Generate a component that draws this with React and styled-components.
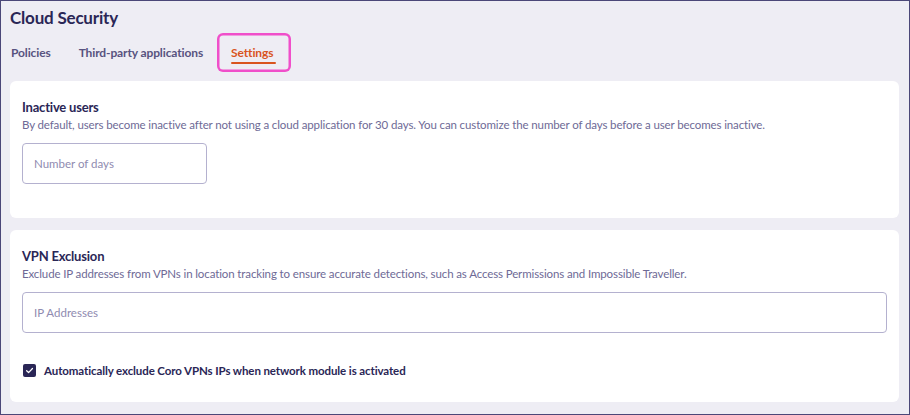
import React from 'react'
import styled, { createGlobalStyle } from 'styled-components'

const GlobalStyle = createGlobalStyle`
  html, body {
    margin: 0;
    padding: 0;
  }
  body {
    font-family: Lato, "Open Sans", sans-serif;
    color: #2a2656;
  }
`

const Page = styled.div`
  box-sizing: border-box;
  width: 910px;
  height: 415px;
  border: 1.5px solid #4b4778;
  background: #eeedf4;
  padding: 5px 10px 0 9px;
  display: flex;
  flex-direction: column;
`

const Title = styled.h1`
  margin: 0;
  font-size: 17px;
  font-weight: 700;
  letter-spacing: -0.2px;
  line-height: 24px;
  color: #2a2656;
`

const Tabs = styled.div`
  display: flex;
  align-items: center;
  height: 46px;
  margin-bottom: 5px;
`

const Tab = styled.button`
  position: relative;
  border: none;
  background: none;
  margin-right: ${({ $gap }) => $gap || 0}px;
  font-family: inherit;
  font-size: 12px;
  font-weight: 700;
  letter-spacing: -0.12px;
  color: ${({ $active }) => ($active ? '#d9541f' : '#58537f')};
  height: 39px;
  display: flex;
  align-items: center;
  padding: ${({ $active }) => ($active ? '0 18px 0 14px' : '0 0 0 1px')};
  border-radius: 6px;
  box-shadow: ${({ $active }) => ($active ? 'inset 0 0 0 2.5px #f04fca' : 'none')};
`

const Underline = styled.span`
  position: absolute;
  left: 14px;
  right: 15px;
  bottom: 8px;
  height: 2px;
  background: #d9541f;
  border-radius: 1px;
`

const Card = styled.section`
  background: #fff;
  border-radius: 6px;
  padding: 17px 12px 0 12px;
  height: ${({ $h }) => $h}px;
  box-sizing: border-box;
  margin-bottom: 12px;
`

const CardTitle = styled.h2`
  margin: 0;
  font-size: 13px;
  font-weight: 700;
  letter-spacing: -0.2px;
  line-height: 18px;
  color: #2a2656;
`

const Desc = styled.p`
  margin: 0;
  font-size: 11.5px;
  letter-spacing: -0.12px;
  line-height: 17px;
  color: #6e6a96;
`

const Input = styled.input`
  box-sizing: border-box;
  display: block;
  width: ${({ $w }) => $w};
  height: 41px;
  margin-top: 10px;
  border: 1px solid #b4b1cf;
  border-radius: 4px;
  padding: 0 11px;
  font-family: inherit;
  font-size: 11.5px;
  color: #2a2656;
  background: #fff;
  &::placeholder {
    color: #8f8bb0;
  }
`

const CheckRow = styled.label`
  display: flex;
  align-items: center;
  gap: 8px;
  margin-top: 31px;
  margin-left: 1px;
  font-size: 11.5px;
  font-weight: 700;
  letter-spacing: -0.1px;
  color: #2a2656;
`

const Box = styled.span`
  width: 13px;
  height: 13px;
  border-radius: 2px;
  background: #2a2656;
  display: flex;
  align-items: center;
  justify-content: center;
`

export default function App() {
  return (
    <>
      <GlobalStyle />
      <Page>
        <Title>Cloud Security</Title>
        <Tabs>
          <Tab $gap={27}>Policies</Tab>
          <Tab $gap={14}>Third-party applications</Tab>
          <Tab $active>
            Settings
            <Underline />
          </Tab>
        </Tabs>
        <Card $h={139}>
          <CardTitle>Inactive users</CardTitle>
          <Desc>
            By default, users become inactive after not using a cloud application for 30 days. You can customize the number of days before a user becomes inactive.
          </Desc>
          <Input $w="185px" placeholder="Number of days" />
        </Card>
        <Card $h={173}>
          <CardTitle>VPN Exclusion</CardTitle>
          <Desc>
            Exclude IP addresses from VPNs in location tracking to ensure accurate detections, such as Access Permissions and Impossible Traveller.
          </Desc>
          <Input $w="100%" placeholder="IP Addresses" />
          <CheckRow>
            <Box>
              <svg width="9" height="9" viewBox="0 0 10 10">
                <path d="M1.8 5.2 L4 7.3 L8.3 2.8" fill="none" stroke="#fff" strokeWidth="1.4" strokeLinecap="round" strokeLinejoin="round" />
              </svg>
            </Box>
            Automatically exclude Coro VPNs IPs when network module is activated
          </CheckRow>
        </Card>
      </Page>
    </>
  )
}
